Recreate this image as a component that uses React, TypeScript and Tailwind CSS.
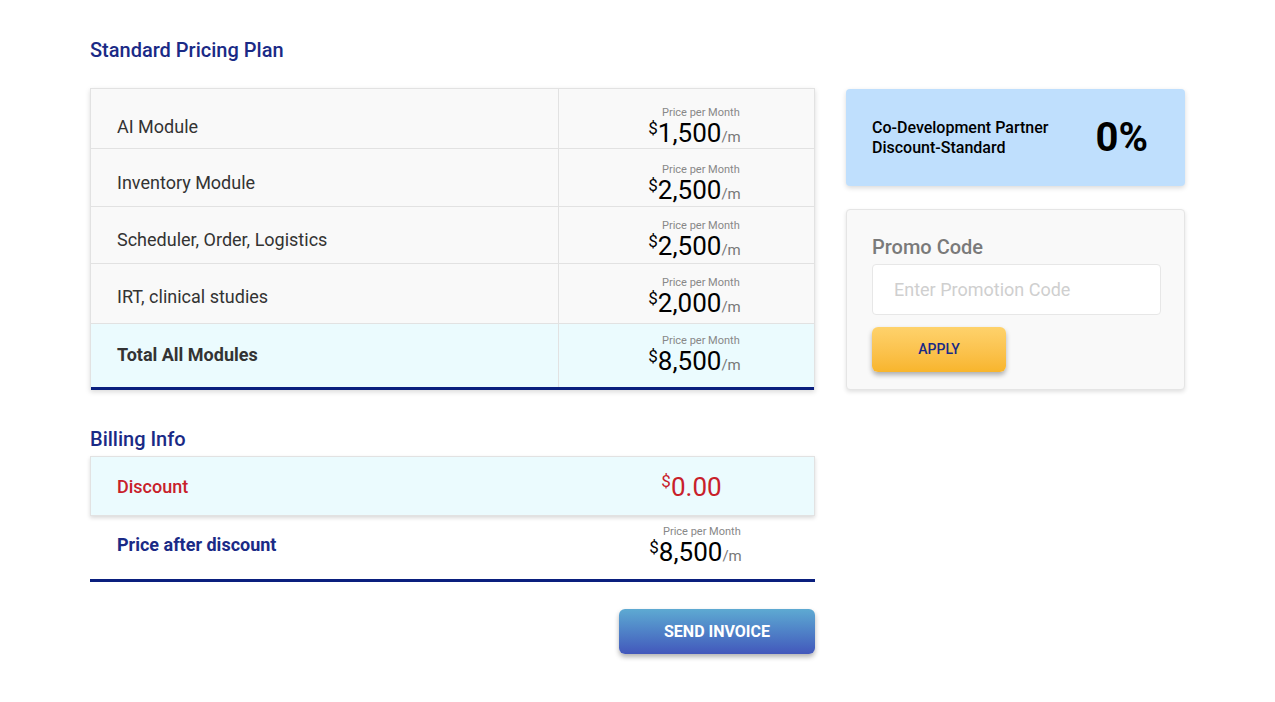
import React from "react";

const modules = [
    { name: "AI Module", price: "1,500", h: "h-[60px]", pt: "pt-[16px]", ppt: "pt-[17px]" },
    { name: "Inventory Module", price: "2,500", h: "h-[58px]", pt: "pt-[10px]", ppt: "pt-[14px]" },
    { name: "Scheduler, Order, Logistics", price: "2,500", h: "h-[57px]", pt: "pt-[9px]", ppt: "pt-[12px]" },
    { name: "IRT, clinical studies", price: "2,000", h: "h-[60px]", pt: "pt-[6px]", ppt: "pt-[12px]" },
];

const Price = ({ value }: { value: string }) => (
    <div className="flex flex-col items-end pl-[16px]">
        <span className="text-[11px] leading-[13px] text-[#888] mr-[1px]">Price per Month</span>
        <div className="flex items-start leading-none">
            <span className="text-[17px] text-black leading-none mt-[1px]">$</span>
            <span className="text-[26px] text-black leading-[29px]">{value}</span>
            <span className="text-[15px] text-[#777] leading-none mt-[11px]">/m</span>
        </div>
    </div>
);

export default function App() {
    return (
        <div className="min-h-screen bg-white font-['Roboto',sans-serif] px-[90px] pt-[38px]">
            <h1 className="text-[20px] font-medium text-[#1a2a86] leading-[24px]">Standard Pricing Plan</h1>
            <div className="flex gap-[31px] mt-[26px] items-start">
                <div className="w-[725px] shrink-0">
                    <div className="border border-[#e2e2e2] shadow-[0_2px_5px_rgba(0,0,0,0.15)] bg-[#f9f9f9] border-b-0">
                        {modules.map((m, i) => (
                            <div key={i} className={`flex ${m.h} border-b border-[#e2e2e2]`}>
                                <div className={`w-[468px] border-r border-[#e2e2e2] flex items-center pl-[26px] ${m.pt}`}>
                                    <span className="text-[18px] text-[#333]">{m.name}</span>
                                </div>
                                <div className={`flex-1 flex justify-center ${m.ppt}`}>
                                    <Price value={m.price} />
                                </div>
                            </div>
                        ))}
                        <div className="flex h-[66px] bg-[#ebfbfe] border-b-[3px] border-[#0a1f7e]">
                            <div className="w-[468px] border-r border-[#e2e2e2] flex items-center pl-[26px] pb-[2px]">
                                <span className="text-[18px] font-bold text-[#333]">Total All Modules</span>
                            </div>
                            <div className="flex-1 flex justify-center pt-[10px]">
                                <Price value="8,500" />
                            </div>
                        </div>
                    </div>

                    <h2 className="text-[20px] font-medium text-[#1a2a86] mt-[37px] leading-[24px]">Billing Info</h2>
                    <div className="mt-[5px]">
                        <div className="flex h-[60px] bg-[#ebfbfe] border border-[#e2e2e2] shadow-[0_2px_4px_rgba(0,0,0,0.15)]">
                            <div className="w-[468px] flex items-center pl-[26px]">
                                <span className="text-[18px] font-medium text-[#c8202a]">Discount</span>
                            </div>
                            <div className="flex-1 flex justify-center items-center pt-[2px]">
                                <div className="flex items-start pl-[10px]">
                                    <span className="text-[17px] text-[#c8202a] leading-none">$</span>
                                    <span className="text-[26px] text-[#c8202a] leading-[29px]">0.00</span>
                                </div>
                            </div>
                        </div>
                        <div className="flex h-[66px] border-b-[3px] border-[#0a1f7e]">
                            <div className="w-[468px] flex items-center pl-[27px] pb-[6px]">
                                <span className="text-[18px] font-bold text-[#1a2a86]">Price after discount</span>
                            </div>
                            <div className="flex-1 flex justify-center pt-[9px] pl-[2px]">
                                <Price value="8,500" />
                            </div>
                        </div>
                    </div>
                    <div className="flex justify-end mt-[27px]">
                        <button className="w-[196px] h-[45px] rounded-[6px] bg-gradient-to-b from-[#5eaad2] to-[#4357bb] text-white font-bold text-[16px] shadow-[0_3px_5px_rgba(0,0,0,0.3)]">
                            SEND INVOICE
                        </button>
                    </div>
                </div>

                <div className="w-[339px] shrink-0 flex flex-col gap-[23px] pt-[1px]">
                    <div className="h-[97px] rounded-[4px] bg-[#bfdffd] shadow-[0_2px_5px_rgba(0,0,0,0.15)] flex items-center justify-between pl-[26px] pr-[37px]">
                        <div className="text-[16px] font-medium text-black leading-[20px] pt-[1px]">
                            <div>Co-Development Partner</div>
                            <div>Discount-Standard</div>
                        </div>
                        <span className="text-[40px] font-bold text-black leading-none">0%</span>
                    </div>
                    <div className="h-[181px] rounded-[4px] bg-[#f9f9f9] border border-[#e5e5e5] shadow-[0_2px_4px_rgba(0,0,0,0.12)] px-[25px] pt-[25px]">
                        <div className="text-[20px] text-[#7a7a7a] font-medium leading-[24px]">Promo Code</div>
                        <input
                            className="mt-[5px] w-[289px] h-[51px] bg-white border border-[#e7e7e7] rounded-[4px] px-[21px] text-[18px] text-[#333] placeholder:text-[#cfcfcf] outline-none"
                            placeholder="Enter Promotion Code"
                        />
                        <button className="mt-[12px] w-[134px] h-[45px] rounded-[6px] bg-gradient-to-b from-[#fed26b] to-[#f8b52b] text-[#1a2a86] font-medium text-[14px] shadow-[0_3px_5px_rgba(0,0,0,0.3)] block">
                            APPLY
                        </button>
                    </div>
                </div>
            </div>
        </div>
    );
}
